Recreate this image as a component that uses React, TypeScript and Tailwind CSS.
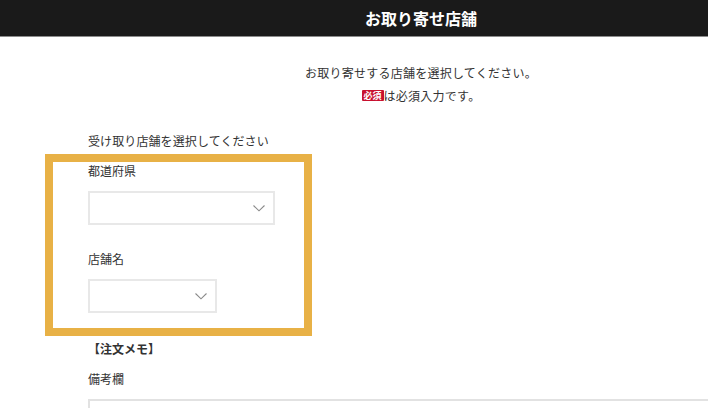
import React from "react";

function Chevron() {
  return (
    <svg width="12" height="7" viewBox="0 0 12 7" className="block">
      <polyline points="0.5,0.5 6,5.8 11.5,0.5" fill="none" stroke="#8a8a8a" strokeWidth="1.1" />
    </svg>
  );
}

function SelectBox({ width }: { width: string }) {
  return (
    <div className={`${width} h-[34px] border-2 border-[#e8e8e8] bg-white flex items-center justify-end pr-[8px]`}>
      <Chevron />
    </div>
  );
}

export default function App() {
  return (
    <div
      className="w-full h-screen overflow-hidden bg-white text-[#333] text-[12px]"
      style={{ fontFamily: '"Noto Sans CJK JP", "Noto Sans", sans-serif' }}
    >
      <header className="h-[37px] bg-[#1a1a1a] border-b border-[#8c8c8c] flex items-center justify-center pl-[134px]">
        <h1 className="text-white font-bold text-[16px] leading-[20px]">お取り寄せ店舗</h1>
      </header>

      <div className="pl-[134px] pt-[24px] text-center leading-[23px] tracking-[0.25px]">
        <p>お取り寄せする店舗を選択してください。</p>
        <p className="flex items-center justify-center">
          <span className="inline-block bg-[#c8102e] text-white font-bold text-[9px] leading-[11px] h-[11px] px-[2px] rounded-[1px] tracking-normal">
            必須
          </span>
          <span>は必須入力です。</span>
        </p>
      </div>

      <div className="pl-[45px] mt-[25px]">
        <p className="pl-[43px] leading-[18px] tracking-[0.1px]">受け取り店舗を選択してください</p>
        <div className="mt-[4px] w-[267px] border-8 border-[#e8b146] pl-[35px] pb-[15px]">
          <p className="leading-[18px]">都道府県</p>
          <div className="mt-[11px]">
            <SelectBox width="w-[187px]" />
          </div>
          <p className="mt-[25px] leading-[18px]">店舗名</p>
          <div className="mt-[11px]">
            <SelectBox width="w-[129px]" />
          </div>
        </div>
        <div className="pl-[43px]">
          <p className="mt-[4px] leading-[18px] font-bold">【注文メモ】</p>
          <p className="mt-[12px] leading-[18px]">備考欄</p>
          <div className="mt-[11px] w-[660px] h-[100px] border-2 border-[#e2e2e2]"></div>
        </div>
      </div>
    </div>
  );
}
